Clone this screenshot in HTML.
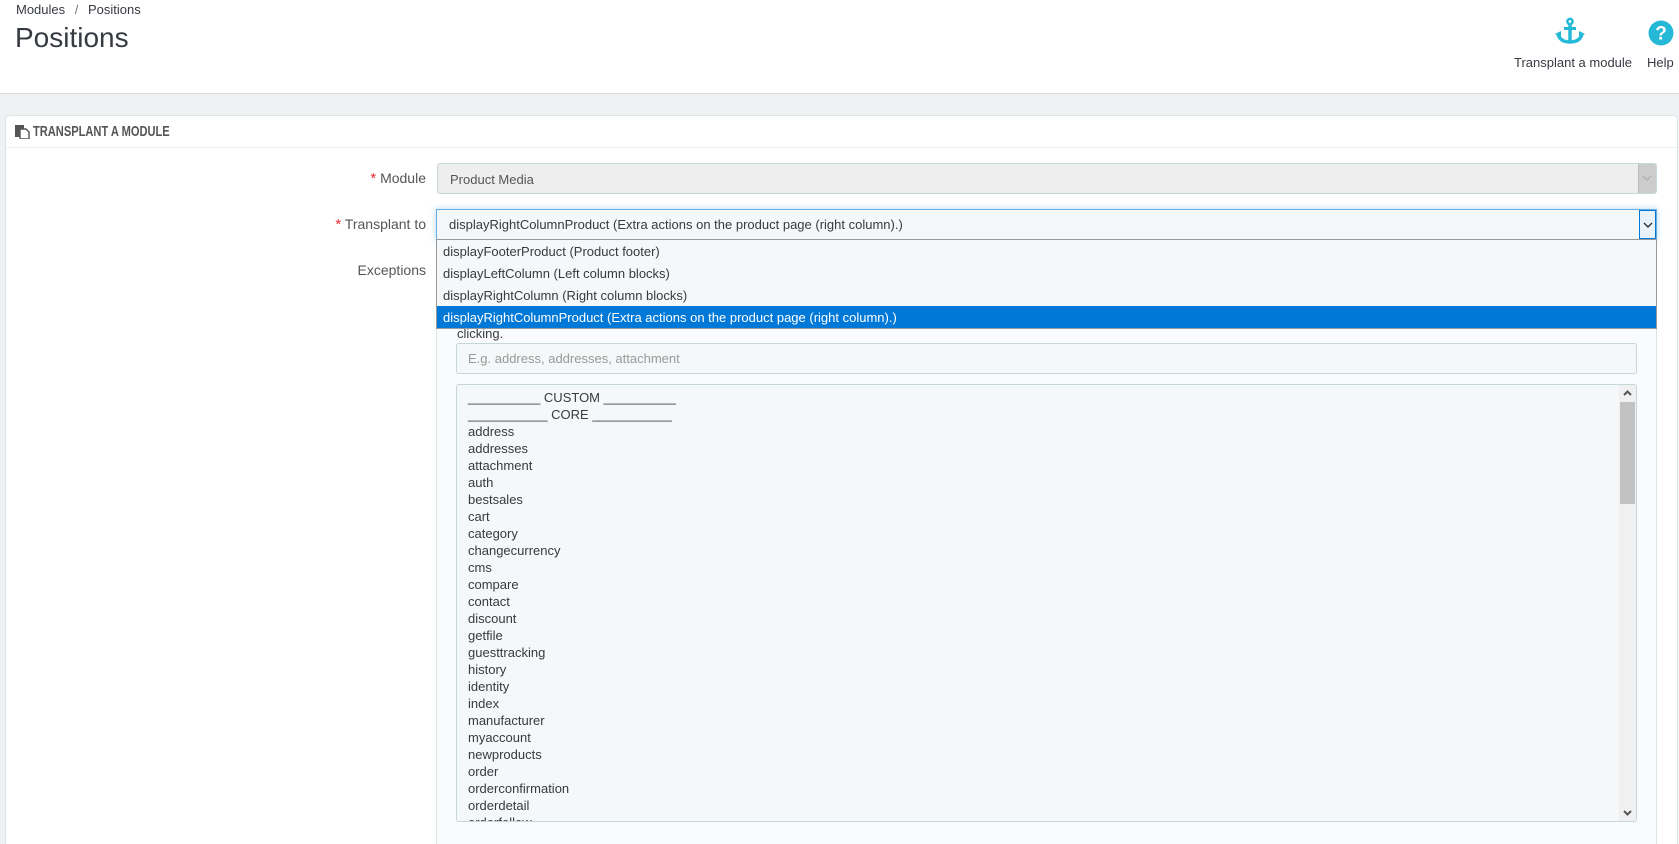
<!DOCTYPE html>
<html><head><meta charset="utf-8"><style>
*{box-sizing:border-box;margin:0;padding:0}
html,body{width:1679px;height:844px;overflow:hidden}
body{background:#eff1f2;font-family:"Liberation Sans",sans-serif;color:#363a41;font-size:13px}
#wrap{position:relative;width:1679px;height:844px;overflow:hidden}
.abs{position:absolute}
#hdr{left:0;top:0;width:1679px;height:94px;background:#fff;border-bottom:1px solid #d9dcde}
#panel{left:5px;top:115px;width:1673px;height:760px;background:#fff;border:1px solid #dbe6e9;border-radius:5px}
.lbl{font-size:14px;color:#555;text-align:right;width:200px}
.req{color:#e62e2e;font-size:15px}
</style></head><body><div id="wrap">
<div id="hdr" class="abs"></div>
<div class="abs" style="left:16px;top:2px;font-size:13px;color:#363a41">Modules <span style="color:#777;margin:0 6px">/</span> Positions</div>
<div class="abs" style="left:15px;top:22px;font-size:28px;color:#363a41">Positions</div>
<svg class="abs" style="left:1555px;top:17px" width="30" height="28" viewBox="0 0 30 28"><g fill="none" stroke="#25b9d7" stroke-width="3.5"><circle cx="15" cy="4.5" r="2.6" stroke-width="2.5"/><line x1="15" y1="7" x2="15" y2="25"/><line x1="9" y1="11.5" x2="21" y2="11.5" stroke-width="3"/><path d="M3 17 Q5 25 15 25 Q25 25 27 17"/></g><path d="M0 17 L6 14 L6 20Z M30 17 L24 14 L24 20Z" fill="#25b9d7"/></svg>
<svg class="abs" style="left:1648px;top:20px" width="26" height="26" viewBox="0 0 26 26"><circle cx="13" cy="13" r="12.5" fill="#25b9d7"/><text x="13" y="19.5" text-anchor="middle" font-family="Liberation Sans" font-weight="bold" font-size="19" fill="#fff">?</text></svg>
<div class="abs" style="left:1514px;top:55px;font-size:13px">Transplant a module</div>
<div class="abs" style="left:1647px;top:55px;font-size:13px">Help</div>

<div id="panel" class="abs"></div>
<svg class="abs" style="left:15px;top:125px" width="15" height="14" viewBox="0 0 15 14"><rect x="0" y="0" width="9" height="12" fill="#555"/><path d="M5 4 h6 l3 3 v7 h-9z" fill="#fff" stroke="#555" stroke-width="1.4"/></svg>
<div class="abs" style="left:33px;top:123px;font-size:15px;font-weight:bold;color:#555;transform:scaleX(0.74);transform-origin:0 0;white-space:nowrap">TRANSPLANT A MODULE</div>
<div class="abs" style="left:6px;top:147px;width:1671px;height:1px;background:#eef0f1"></div>

<div class="abs lbl" style="left:226px;top:170px"><span class="req">*</span> Module</div>
<div class="abs" style="left:437px;top:163px;width:1220px;height:31px;background:#eee;border:1px solid #c7d6db;border-radius:3px;padding:8px 12px;font-size:13px;color:#555">Product Media</div>
<div class="abs" style="left:1638px;top:164px;width:18px;height:29px;background:#ccc;border-left:1px solid #bbb"></div>
<svg class="abs" style="left:1642px;top:175px" width="10" height="6"><path d="M1 1 L5 5 L9 1" fill="none" stroke="#aaa" stroke-width="1"/></svg>

<div class="abs" style="left:436px;top:248px;width:1221px;height:600px;background:#fafbfc;border-left:1px solid #dbe6e9;border-right:1px solid #dbe6e9"></div>
<div class="abs lbl" style="left:226px;top:262px">Exceptions</div>
<div class="abs" style="left:457px;top:326px;font-size:13px">clicking.</div>
<div class="abs" style="left:456px;top:343px;width:1181px;height:31px;background:#f5f8f9;border:1px solid #c7d6db;border-radius:3px;padding:7px 11px;color:#999;font-size:13px">E.g. address, addresses, attachment</div>
<div class="abs" style="left:456px;top:384px;width:1181px;height:438px;background:#f5f8f9;border:1px solid #c7d6db;border-radius:3px;overflow:hidden">
<div style="padding:4px 11px;font-size:13px;line-height:17px;color:#363a41">
<div>__________ CUSTOM __________</div><div>___________ CORE ___________</div>
<div>address</div><div>addresses</div><div>attachment</div><div>auth</div><div>bestsales</div><div>cart</div><div>category</div><div>changecurrency</div><div>cms</div><div>compare</div><div>contact</div><div>discount</div><div>getfile</div><div>guesttracking</div><div>history</div><div>identity</div><div>index</div><div>manufacturer</div><div>myaccount</div><div>newproducts</div><div>order</div><div>orderconfirmation</div><div>orderdetail</div><div>orderfollow</div></div>
<div class="abs" style="right:0;top:0;width:17px;height:436px;background:#f0f0f0"></div>
<div class="abs" style="right:1px;top:17px;width:15px;height:102px;background:#c2c2c2"></div>
<svg class="abs" style="right:4px;top:5px" width="9" height="6"><path d="M1 5 L4.5 1.5 L8 5" fill="none" stroke="#555" stroke-width="2"/></svg>
<svg class="abs" style="right:4px;bottom:5px" width="9" height="6"><path d="M1 1 L4.5 4.5 L8 1" fill="none" stroke="#555" stroke-width="2"/></svg>
</div>

<div class="abs lbl" style="left:226px;top:216px"><span class="req">*</span> Transplant to</div>
<div class="abs" style="left:436px;top:209px;width:1221px;height:31px;background:#f5f8f9;border:1px solid #66afe9;box-shadow:0 0 6px rgba(102,175,233,.5);padding:7px 12px;font-size:13px">displayRightColumnProduct (Extra actions on the product page (right column).)</div>
<div class="abs" style="left:1639px;top:210px;width:17px;height:29px;border:1px solid #0078d7;background:#e8f2fb"></div>
<svg class="abs" style="left:1643px;top:222px" width="10" height="6"><path d="M1 1 L5 5 L9 1" fill="none" stroke="#222" stroke-width="1.3"/></svg>
<div class="abs" style="left:436px;top:239px;width:1221px;height:90px;background:#f5f8f9;border:1px solid #999;font-size:13px">
<div style="height:22px;padding:4px 6px">displayFooterProduct (Product footer)</div>
<div style="height:22px;padding:4px 6px">displayLeftColumn (Left column blocks)</div>
<div style="height:22px;padding:4px 6px">displayRightColumn (Right column blocks)</div>
<div style="height:22px;padding:4px 6px;background:#0078d7;color:#fff">displayRightColumnProduct (Extra actions on the product page (right column).)</div>
</div>
</div></body></html>
